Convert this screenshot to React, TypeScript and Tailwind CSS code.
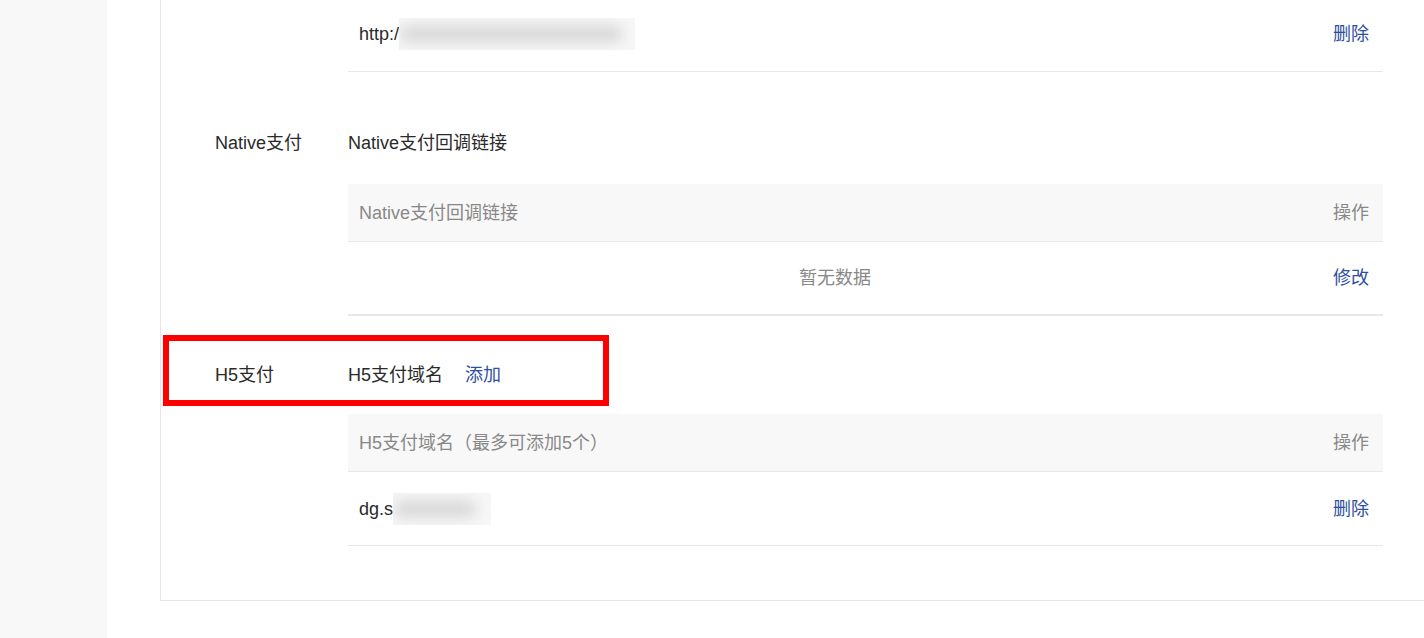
import React from 'react'

const font = { fontFamily: '"Liberation Sans", "Noto Sans CJK SC", sans-serif' }

function Blur({ w, inner }: { w: string; inner: string }) {
    return (
        <span className={`inline-block h-[32px] overflow-hidden align-middle bg-[#f7f7f7] ${w}`}>
            <span className={`block mt-[8px] ml-[2px] h-[16px] bg-[#d6d6d6] blur-[7px] ${inner}`} />
        </span>
    )
}

function Header({ title }: { title: string }) {
    return (
        <div className="flex h-[58px] items-center border-b border-[#e8e8e8] bg-[#f8f8f8] text-[#888]">
            <div className="flex-1 pl-[11px]">{title}</div>
            <div className="w-[61px] pr-[14px] text-right">操作</div>
        </div>
    )
}

function Link({ children }: { children: React.ReactNode }) {
    return <span className="text-[#2e4e9f] cursor-pointer">{children}</span>
}

export default function App() {
    return (
        <div className="flex h-[638px] w-[1424px] overflow-hidden bg-white text-[18px] leading-[24px] text-[#2a2a2a]" style={font}>
            <div className="w-[107px] shrink-0 bg-[#f8f8f8]" />
            <div className="flex-1 pl-[53px]">
                <div className="relative h-[601px] border-b border-l border-[#e6e6e6] pr-[41px]">
                    {/* callback url row, scrolled off above */}
                    <div className="ml-[187px] flex h-[72px] items-center border-b border-[#e8e8e8] pb-[3px]">
                        <div className="flex flex-1 items-center pl-[11px]">
                            <span>http:/</span>
                            <Blur w="w-[236px]" inner="w-[220px]" />
                        </div>
                        <div className="w-[61px] pr-[14px] text-right"><Link>删除</Link></div>
                    </div>

                    {/* Native */}
                    <div className="flex pt-[59px] pb-[29px]">
                        <div className="w-[187px] pl-[54px]">Native支付</div>
                        <div>Native支付回调链接</div>
                    </div>
                    <div className="ml-[187px]">
                        <Header title="Native支付回调链接" />
                        <div className="flex h-[74px] items-center border-b-2 border-[#e8e8e8]">
                            <div className="flex-1 text-center text-[#888]">暂无数据</div>
                            <div className="w-[61px] pr-[14px] text-right"><Link>修改</Link></div>
                        </div>
                    </div>

                    {/* H5 */}
                    <div className="flex pt-[47px] pb-[27px]">
                        <div className="w-[187px] pl-[54px]">H5支付</div>
                        <div className="flex gap-[22px]">
                            <span>H5支付域名</span>
                            <Link>添加</Link>
                        </div>
                    </div>
                    <div className="ml-[187px]">
                        <Header title="H5支付域名（最多可添加5个）" />
                        <div className="flex h-[74px] items-center border-b border-[#e8e8e8]">
                            <div className="flex flex-1 items-center pl-[11px]">
                                <span>dg.s</span>
                                <Blur w="w-[98px]" inner="w-[80px]" />
                            </div>
                            <div className="w-[61px] pr-[14px] text-right"><Link>删除</Link></div>
                        </div>
                    </div>

                    {/* annotation */}
                    <div className="pointer-events-none absolute left-[2px] top-[335px] h-[71px] w-[446px] border-[6px] border-[#ff0000]" />
                </div>
            </div>
        </div>
    )
}
